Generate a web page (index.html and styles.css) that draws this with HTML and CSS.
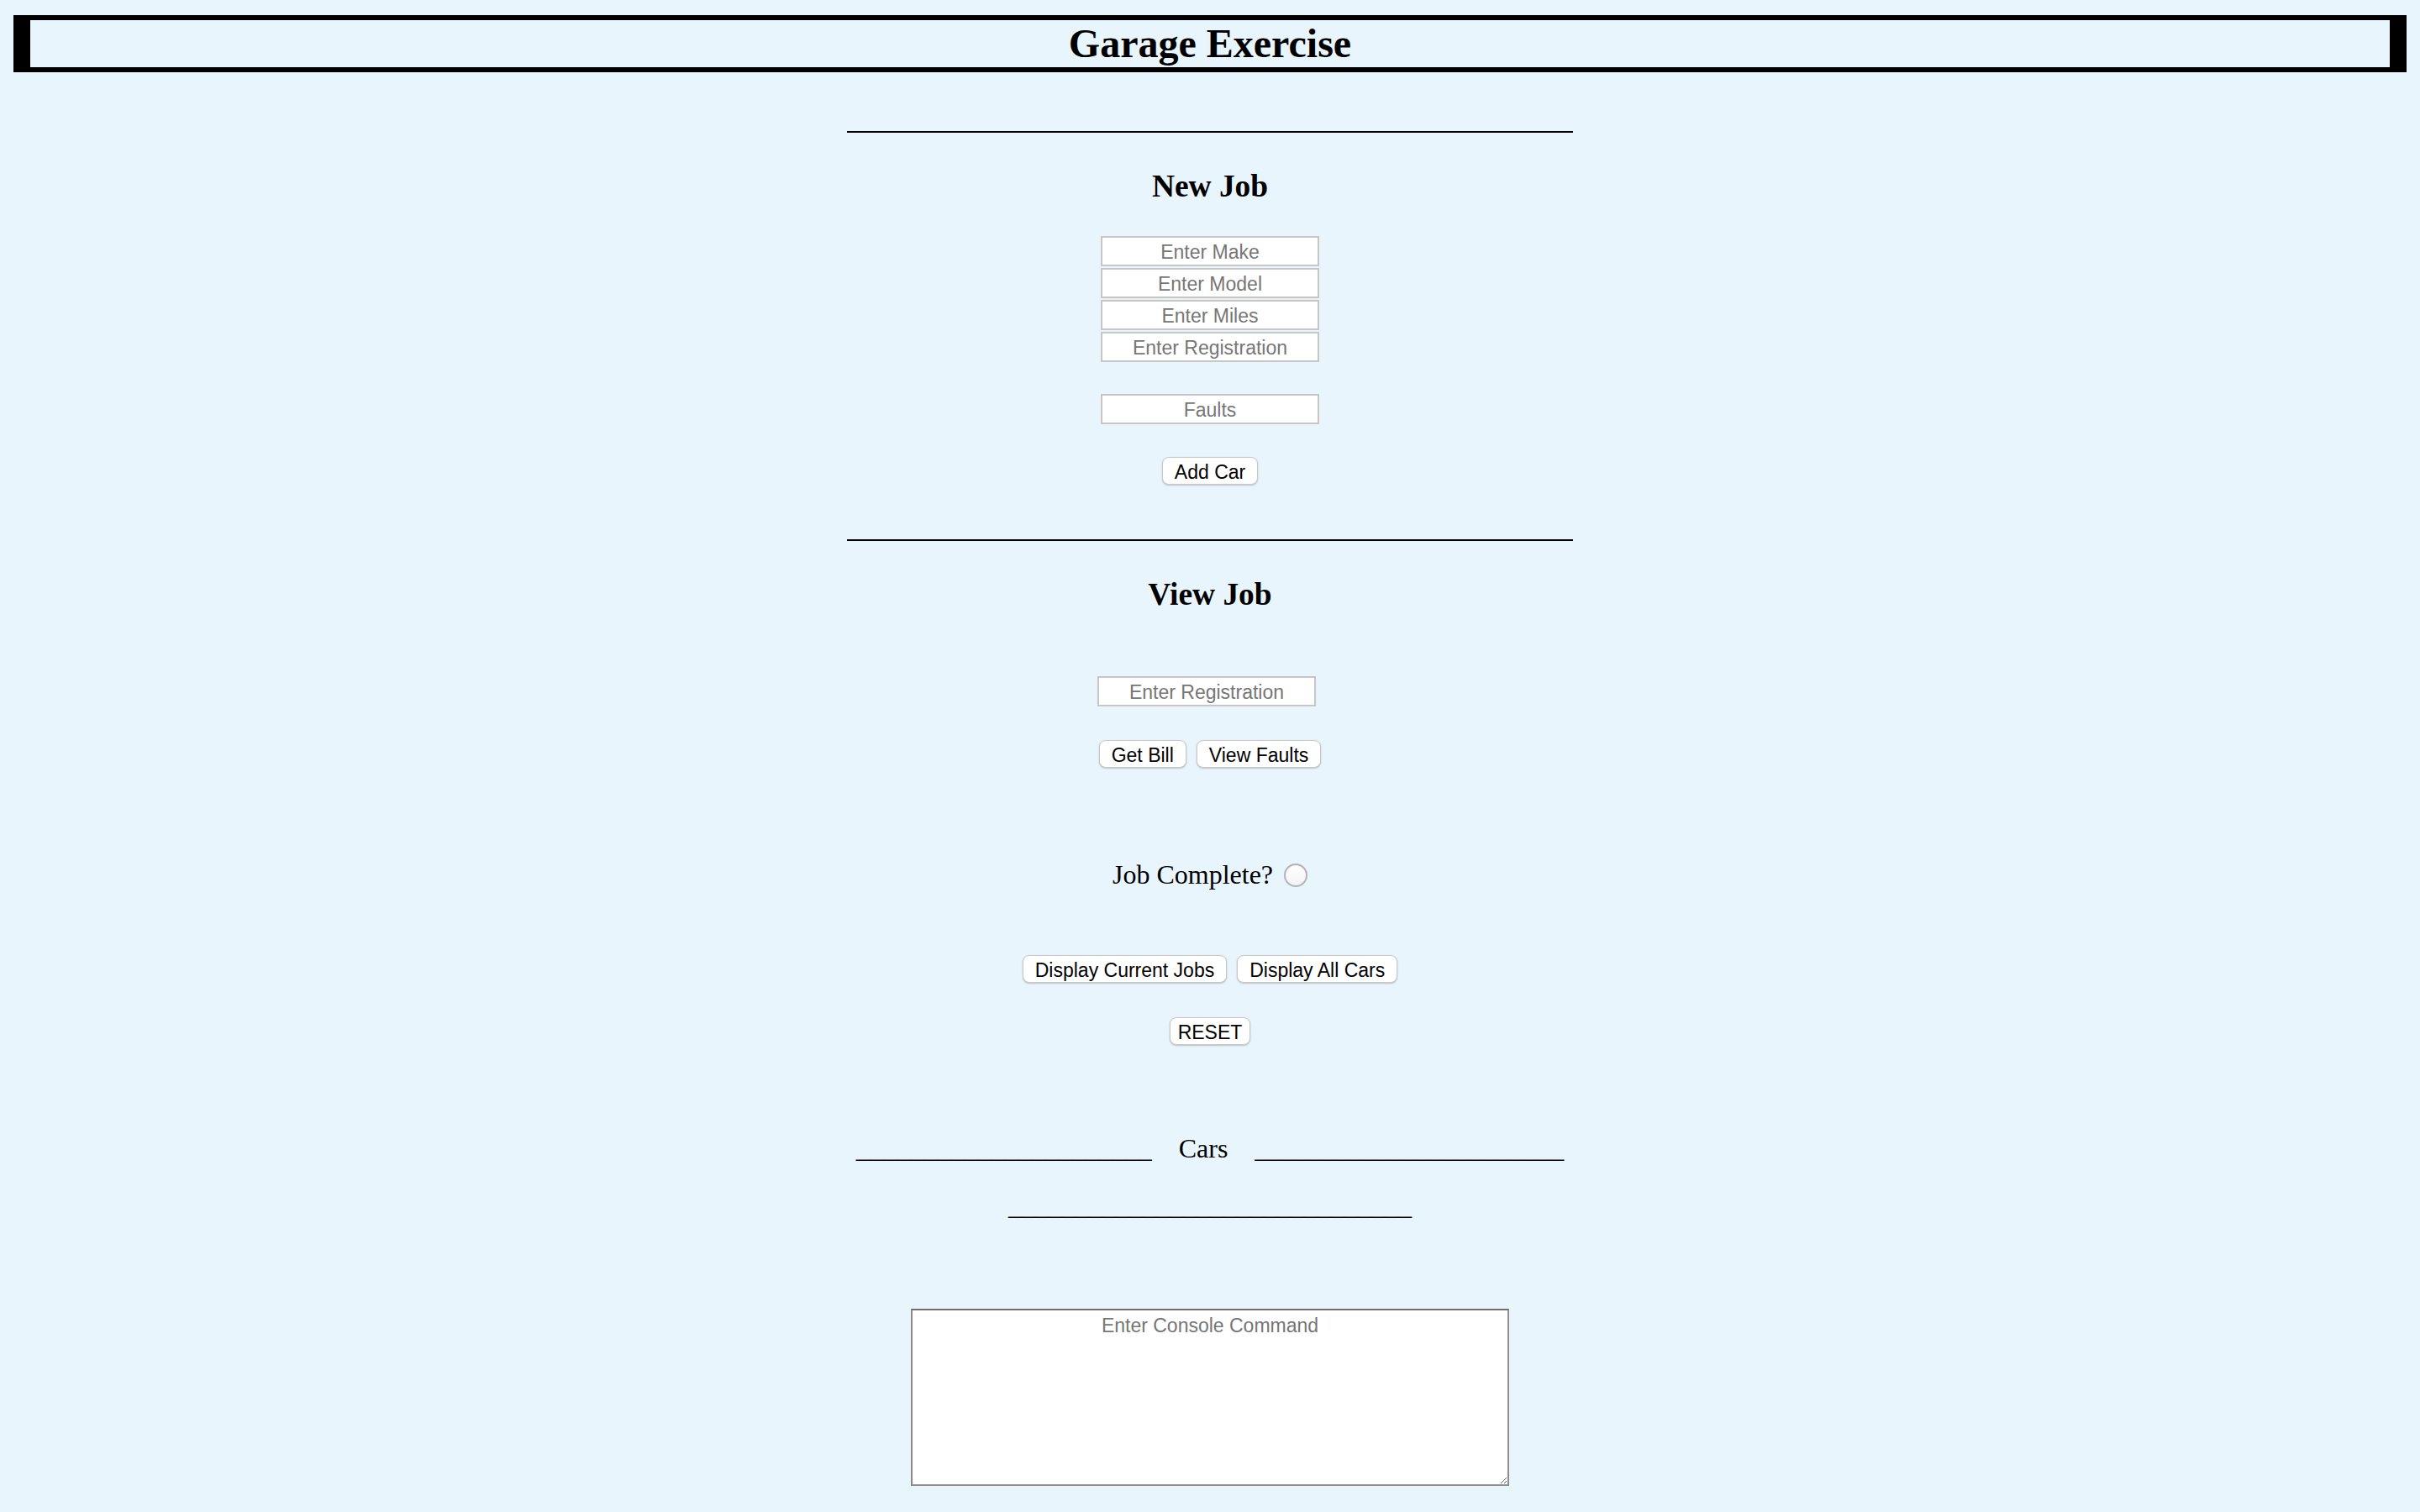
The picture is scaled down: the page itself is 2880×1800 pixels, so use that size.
FILE: index.html
```html
<!DOCTYPE html>
<html lang="en">
<head>
<meta charset="utf-8">
<title>Garage Exercise</title>
<link rel="stylesheet" href="styles.css">
</head>
<body>
<header class="banner">
  <h2 class="banner-title">Garage Exercise</h2>
</header>
<main class="page">
  <div class="rule rule-first"></div>
  <h3 class="section-title">New Job</h3>
  <div class="field-stack">
    <input class="field" type="text" placeholder="Enter Make">
    <input class="field" type="text" placeholder="Enter Model">
    <input class="field" type="text" placeholder="Enter Miles">
    <input class="field" type="text" placeholder="Enter Registration">
  </div>
  <input class="field field-faults" type="text" placeholder="Faults">
  <button class="btn btn-add" type="button">Add Car</button>

  <div class="rule rule-second"></div>
  <h3 class="section-title">View Job</h3>
  <input class="field field-reg" type="text" placeholder="Enter Registration">
  <div class="btn-row btn-row-view">
    <button class="btn" type="button">Get Bill</button>
    <button class="btn" type="button">View Faults</button>
  </div>
  <label class="complete-row">
    <span class="complete-text">Job Complete?</span>
    <input class="radio" type="radio" name="complete">
  </label>
  <div class="btn-row btn-row-display">
    <button class="btn" type="button">Display Current Jobs</button>
    <button class="btn" type="button">Display All Cars</button>
  </div>
  <button class="btn btn-reset" type="button">RESET</button>

  <div class="cars-head">______________________&nbsp;&nbsp;&nbsp;&nbsp;Cars&nbsp;&nbsp;&nbsp;&nbsp;_______________________</div>
  <div class="cars-foot">______________________________</div>

  <textarea class="console" placeholder="Enter Console Command"></textarea>
</main>
</body>
</html>
```

FILE: styles.css
```css
html, body {
  background: #e9f5fc;
}

body {
  margin: 0;
  padding: 18px 16px 0;
  font-family: "Liberation Serif", "Times New Roman", serif;
  color: #000;
}

.banner {
  border-style: solid;
  border-color: #000;
  border-width: 6px 20px;
  height: 56px;
  box-sizing: content-box;
}

.banner-title {
  margin: 0;
  padding-top: 1px;
  font-size: 48px;
  font-weight: bold;
  line-height: 53px;
  text-align: center;
}

.page {
  display: flex;
  flex-direction: column;
  align-items: center;
}

.rule {
  width: 864px;
  height: 2px;
  background: #000;
}

.rule-first {
  margin-top: 70px;
}

.rule-second {
  margin-top: 65px;
}

.section-title {
  margin: 42px 0 0;
  padding-top: 1px;
  font-size: 37.44px;
  font-weight: bold;
  line-height: 42px;
  height: 41px;
}

.field-stack {
  margin-top: 39px;
  display: flex;
  flex-direction: column;
  gap: 2px;
}

.field {
  box-sizing: border-box;
  width: 260px;
  height: 36px;
  margin: 0;
  padding: 2px 4px 0;
  border: 2px solid #c6c6c6;
  background: #fff;
  font-family: "Liberation Sans", Arial, sans-serif;
  font-size: 23px;
  color: #000;
  text-align: center;
  outline: none;
}

.field::placeholder,
.console::placeholder {
  color: #767676;
  opacity: 1;
}

.field-faults {
  margin-top: 38px;
}

.field-reg {
  margin-top: 77px;
  margin-right: 8px;
}

.btn {
  box-sizing: border-box;
  height: 33px;
  margin: 0;
  padding: 4px 14px 0;
  border: 1px solid #c8c8c8;
  border-radius: 8px;
  background: #fff;
  box-shadow: 0 1px 2px rgba(0, 0, 0, 0.22);
  font-family: "Liberation Sans", Arial, sans-serif;
  font-size: 23px;
  line-height: 27px;
  color: #000;
}

.btn-add {
  margin-top: 39px;
}

.btn-row {
  display: flex;
  gap: 12px;
}

.btn-row-view {
  margin-top: 40px;
}

.btn-row-display {
  margin-top: 77px;
}

.btn-reset {
  margin-top: 41px;
  padding-left: 9px;
  padding-right: 9px;
}

.complete-row {
  margin-top: 109px;
  display: flex;
  align-items: center;
  gap: 13px;
  height: 37px;
  font-size: 32px;
  line-height: 37px;
}

.radio {
  appearance: none;
  -webkit-appearance: none;
  box-sizing: border-box;
  width: 28px;
  height: 28px;
  margin: 0;
  border: 2px solid #b4b4b4;
  border-radius: 50%;
  background: linear-gradient(#ffffff, #f3f3f3);
  box-shadow: inset 0 1px 1px rgba(0, 0, 0, 0.05);
}

.cars-head {
  margin-top: 105px;
  font-size: 32px;
  line-height: 37px;
  white-space: nowrap;
}

.cars-foot {
  margin-top: 31px;
  font-size: 32px;
  line-height: 37px;
  white-space: nowrap;
}

.console {
  box-sizing: border-box;
  width: 712px;
  height: 211px;
  margin: 104px 0 0;
  padding: 5px 4px 4px;
  border-style: solid;
  border-width: 2px;
  border-color: #6e6e6e #8f8f8f #8f8f8f #8a8a8a;
  background: #fff;
  font-family: "Liberation Sans", Arial, sans-serif;
  font-size: 23px;
  text-align: center;
  outline: none;
}
```
